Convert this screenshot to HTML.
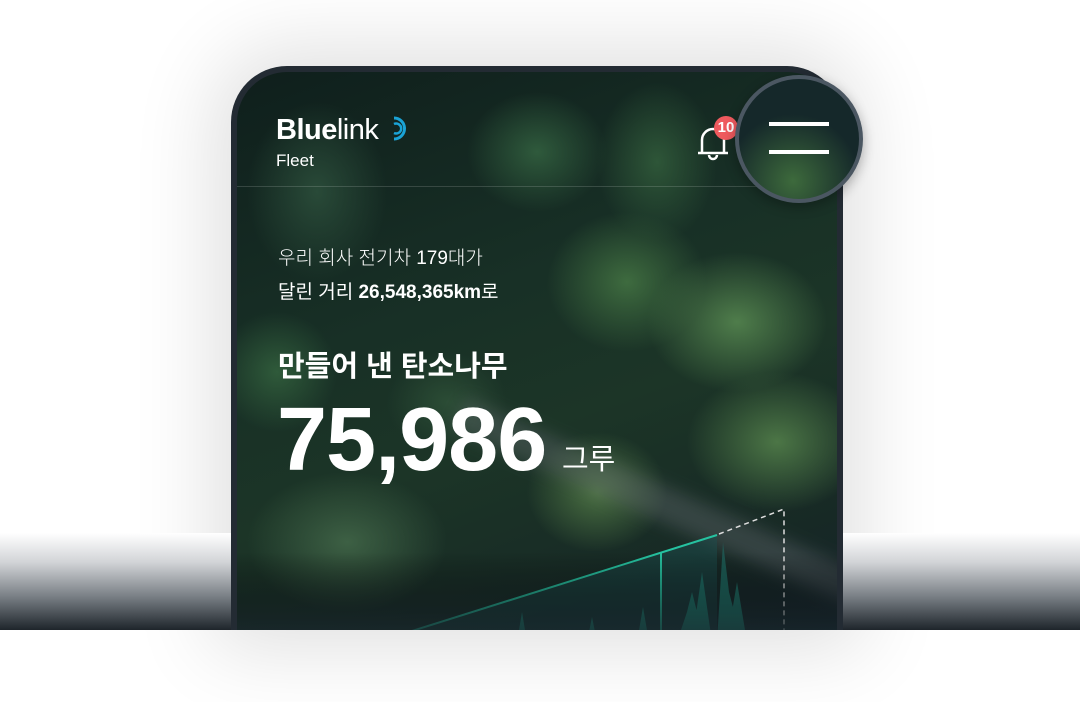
<!DOCTYPE html>
<html><head><meta charset="utf-8"><style>
html,body{margin:0;padding:0;width:1080px;height:702px;overflow:hidden;background:#fff;font-family:"Liberation Sans","Noto Sans CJK KR",sans-serif;}
.band{position:absolute;left:0;top:533px;width:1080px;height:97px;background:linear-gradient(#fff,#d2d4d7 30%,#7a8086 65%,#1e252b);}
.phone{position:absolute;left:231px;top:66px;width:612px;height:564px;background:#232b33;border-radius:56px 56px 0 0;overflow:hidden;}
.glow{position:absolute;left:231px;top:66px;width:612px;height:564px;border-radius:56px 56px 0 0;box-shadow:0 0 80px 20px rgba(0,0,0,0.12);}
.screen{position:absolute;left:6px;top:6px;right:6px;bottom:0;border-radius:50px 50px 0 0;overflow:hidden;
background:
radial-gradient(ellipse 90px 70px at 500px 250px,#4f7d4b,transparent),
radial-gradient(ellipse 80px 70px at 390px 210px,#3e6b3f,transparent),
radial-gradient(ellipse 70px 60px at 300px 80px,#2f5a3c,transparent),
radial-gradient(ellipse 60px 80px at 420px 90px,#2e5638,transparent),
radial-gradient(ellipse 70px 90px at 80px 120px,#294a38,transparent),
radial-gradient(ellipse 90px 70px at 540px 370px,#4c7646,transparent),
radial-gradient(ellipse 100px 70px at 110px 470px,#3d6044,transparent),
radial-gradient(ellipse 70px 60px at 360px 420px,#4a6f42,transparent),
radial-gradient(ellipse 60px 60px at 40px 300px,#2f5a3a,transparent),
radial-gradient(ellipse 60px 50px at 210px 330px,#2b4c35,transparent),
linear-gradient(160deg,#0f1f1c,#183026 40%,#1c3527 60%,#172925 85%,#15222a);}
.road{position:absolute;left:200px;top:430px;width:520px;height:34px;background:rgba(110,115,120,0.35);transform:rotate(24deg);filter:blur(8px);}
.hdr{position:absolute;left:0;right:0;top:114px;height:1px;background:rgba(255,255,255,0.15);}
.t{position:absolute;color:#fff;white-space:nowrap;}
.menu{position:absolute;left:735px;top:75px;width:120px;height:120px;border-radius:50%;border:4px solid #4b5762;background:radial-gradient(circle at 45% 85%,#3d6a3c,#15282a 55%);box-shadow:0 4px 12px rgba(0,0,0,.3);}
.menu i{position:absolute;left:30px;width:60px;height:4px;background:#fff;}
</style></head><body>
<div class="glow"></div>
<div class="band"></div>
<div class="phone"><div class="screen">
<div class="road"></div>
<div class="hdr"></div>
<svg style="position:absolute;left:0;top:420px" width="600" height="140">
<defs><linearGradient id="g" x1="0" y1="0" x2="0" y2="1"><stop offset="0" stop-color="#1f6b66" stop-opacity=".5"/><stop offset="1" stop-color="#1fa890" stop-opacity=".9"/></linearGradient>
<linearGradient id="f" x1="0" y1="0" x2="0" y2="1"><stop offset="0" stop-color="#000" stop-opacity="0"/><stop offset="1" stop-color="#1b2a30" stop-opacity=".9"/></linearGradient></defs>
<path d="M140 150 L480 43 L480 150Z" fill="#1b4d4d" opacity=".5"/>
<path d="M280 150 L285 120 L290 150Z M350 150 L355 125 L360 150Z M400 150 L406 115 L412 150Z M440 150 L450 120 L455 100 L460 120 L470 150Z M455 150 L465 80 L475 150Z M480 150 L486 50 L492 100 L505 150Z M490 150 L500 90 L510 150Z" fill="url(#g)"/>
<path d="M140 150 L480 43" stroke="#26c2a0" stroke-width="2"/>
<line x1="424" y1="61" x2="424" y2="150" stroke="#26c2a0" stroke-width="2"/>
<path d="M482 42 L547 17 L547 150" stroke="#ddd" stroke-width="1.5" fill="none" stroke-dasharray="5 4"/>
<rect x="0" y="60" width="600" height="90" fill="url(#f)"/>
</svg>
</div></div>
<div class="t" style="left:276px;top:114px;font-size:29px;letter-spacing:-0.5px;"><b>Blue</b>link</div>
<svg style="position:absolute;left:388px;top:115px" width="22" height="28"><path d="M6 3 A10 10 0 1 1 6 24" stroke="#1aa3d6" stroke-width="3" fill="none"/><path d="M6 9 A5 5 0 1 1 6 18" stroke="#1aa3d6" stroke-width="2.5" fill="none"/></svg>
<div class="t" style="left:276px;top:151px;font-size:17px;">Fleet</div>
<svg style="position:absolute;left:696px;top:122px" width="36" height="40"><path d="M6 30 L6 18 A11 11 0 0 1 28 18 L28 30 M2 31 L32 31 M13 33 A4 4 0 0 0 21 33" stroke="#fff" stroke-width="2.5" fill="none"/></svg>
<div style="position:absolute;left:714px;top:116px;width:24px;height:24px;border-radius:50%;background:#ef5a5e;color:#fff;font-size:15px;font-weight:bold;line-height:24px;text-align:center;">10</div>
<div class="menu"><i style="top:43px"></i><i style="top:71px"></i></div>
<div class="t" style="left:278px;top:243px;font-size:19px;font-weight:300;">우리 회사 전기차 179대가</div>
<div class="t" style="left:278px;top:277px;font-size:19px;">달린 거리 <span style="font-weight:bold">26,548,365km</span>로</div>
<div class="t" style="left:278px;top:343px;font-size:29px;font-weight:bold;">만들어 낸 탄소나무</div>
<div class="t" style="left:277px;top:389px;font-size:90px;font-weight:bold;letter-spacing:-1px;">75,986</div>
<div class="t" style="left:562px;top:436px;font-size:29px;">그루</div>
</body></html>
